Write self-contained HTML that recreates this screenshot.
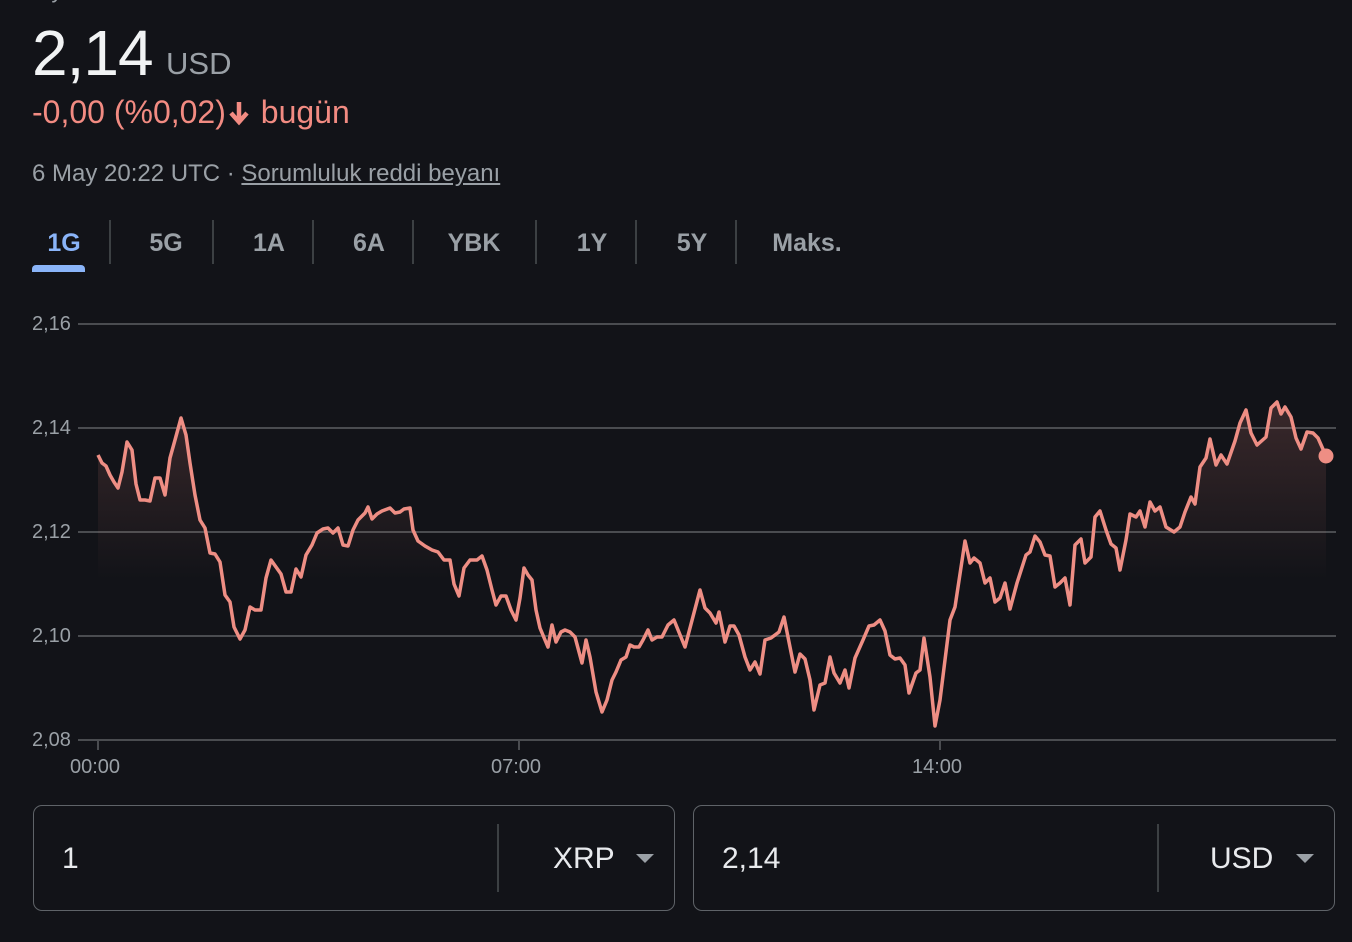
<!DOCTYPE html>
<html><head><meta charset="utf-8"><style>
body{margin:0;width:1352px;height:942px;background:#121318;overflow:hidden;font-family:"Liberation Sans",Arial,sans-serif;position:relative}
.a{position:absolute;white-space:nowrap}
.tab{position:absolute;top:229px;font-size:25px;font-weight:bold;color:#9aa0a6;transform:translateX(-50%)}
.sep{position:absolute;top:220px;width:2px;height:44px;background:#3c4043}
.yl{position:absolute;left:32px;font-size:20px;color:#9aa0a6}
.box{position:absolute;top:805px;height:104px;width:640px;border:1.5px solid #5f6368;border-radius:9px}
.box .v{position:absolute;left:28px;top:36px;font-size:30px;color:#e8eaed}
.box .d{position:absolute;left:463px;top:18px;width:2px;height:68px;background:#3c4043}
.box .c{position:absolute;top:36px;font-size:30px;color:#e8eaed}
.box .t{position:absolute;left:602px;top:48px;width:0;height:0;border-left:9px solid transparent;border-right:9px solid transparent;border-top:9px solid #9aa0a6}
</style></head><body>
<div class="a" style="left:32px;top:-22px;font-size:22px;color:#9aa0a6">Piyasa Özeti</div>
<div class="a" style="left:32px;top:16px;font-size:64px;color:#f1f3f4;letter-spacing:-1px">2,14</div>
<div class="a" style="left:166px;top:46px;font-size:31px;color:#9aa0a6">USD</div>
<div class="a" style="left:32px;top:94px;font-size:32px;color:#f28b82">-0,00 (%0,02)<svg width="26" height="26" viewBox="0 0 26 26" style="vertical-align:-3px"><path d="M13 2v17M5 13l8 9 8-9" stroke="#f28b82" stroke-width="4.5" fill="none"/></svg> bugün</div>
<div class="a" style="left:32px;top:160px;font-size:24px;color:#9aa0a6">6 May 20:22 UTC · <span style="text-decoration:underline">Sorumluluk reddi beyanı</span></div>
<div class="tab" style="left:64px;color:#8ab4f8">1G</div>
<div class="a" style="left:32px;top:265px;width:53px;height:7px;background:#8ab4f8;border-radius:4px 4px 0 0"></div>
<div class="tab" style="left:166px">5G</div><div class="tab" style="left:269px">1A</div><div class="tab" style="left:369px">6A</div><div class="tab" style="left:474px">YBK</div><div class="tab" style="left:592px">1Y</div><div class="tab" style="left:692px">5Y</div><div class="tab" style="left:807px">Maks.</div>
<div class="sep" style="left:109px"></div><div class="sep" style="left:212px"></div><div class="sep" style="left:312px"></div><div class="sep" style="left:412px"></div><div class="sep" style="left:535px"></div><div class="sep" style="left:635px"></div><div class="sep" style="left:735px"></div>
<div class="yl" style="top:313px">2,16</div><div class="yl" style="top:417px">2,14</div><div class="yl" style="top:521px">2,12</div><div class="yl" style="top:625px">2,10</div><div class="yl" style="top:729px">2,08</div>
<div class="a" style="left:70px;top:756px;font-size:20px;color:#9aa0a6">00:00</div>
<div class="a" style="left:491px;top:756px;font-size:20px;color:#9aa0a6">07:00</div>
<div class="a" style="left:912px;top:756px;font-size:20px;color:#9aa0a6">14:00</div>
<svg class="a" style="left:0;top:0" width="1352" height="942">
<defs><linearGradient id="g" x1="0" y1="400" x2="0" y2="580" gradientUnits="userSpaceOnUse"><stop offset="0" stop-color="#f28b82" stop-opacity="0.18"/><stop offset="1" stop-color="#f28b82" stop-opacity="0"/></linearGradient></defs>
<g stroke="#4a4c50" stroke-width="2"><line x1="78" y1="324" x2="1336" y2="324"/><line x1="78" y1="428" x2="1336" y2="428"/><line x1="78" y1="532" x2="1336" y2="532"/><line x1="78" y1="636" x2="1336" y2="636"/><line x1="78" y1="740" x2="1336" y2="740"/><line x1="98" y1="740" x2="98" y2="750"/><line x1="519" y1="740" x2="519" y2="750"/><line x1="940" y1="740" x2="940" y2="750"/></g>
<polyline fill="url(#g)" stroke="none" points="98,580 98,455 102,463 106,466 110,475 114,482 118,488 122,472 127,442 132,450 136,484 140,500 145,500 150,501 155,478 160,478 165,495 170,458 175,440 181,418 186,435 190,463 195,495 200,520 205,528 210,553 215,554 220,562 225,595 230,602 234,627 240,639 245,630 250,607 255,610 261,610 266,578 271,560 276,567 281,574 286,592 291,592 296,569 301,577 306,555 312,545 317,533 323,529 328,528 333,533 338,528 343,545 348,546 353,530 358,520 365,513 368,507 372,519 377,514 382,511 390,508 395,513 400,512 404,509 410,508 413,530 418,541 425,546 432,550 438,552 444,560 450,580 1326,580 1326,456 1318,438 1313,433 1307,432 1301,449 1296,438 1291,417 1285,407 1281,414 1277,402 1271,408 1266,437 1257,445 1251,433 1246,410 1240,423 1235,441 1227,464 1221,455 1216,465 1210,439 1206,458 1200,467 1195,504 1191,497 1185,512 1180,527 1174,532 1166,527 1160,507 1155,511 1150,502 1145,527 1140,511 1136,517 1130,514 1126,540 1120,570 1116,580"/>
<polyline fill="none" stroke="#ee8e84" stroke-width="3.5" stroke-linejoin="round" points="98,455 102,463 106,466 110,475 114,482 118,488 122,472 127,442 132,450 136,484 140,500 145,500 150,501 155,478 160,478 165,495 170,458 175,440 181,418 186,435 190,463 195,495 200,520 205,528 210,553 215,554 220,562 225,595 230,602 234,627 240,639 245,630 250,607 255,610 261,610 266,578 271,560 276,567 281,574 286,592 291,592 296,569 301,577 306,555 312,545 317,533 323,529 328,528 333,533 338,528 343,545 348,546 353,530 358,520 365,513 368,507 372,519 377,514 382,511 390,508 395,513 400,512 404,509 410,508 413,530 418,541 425,546 432,550 438,552 444,560 450,560 454,584 459,596 464,568 470,560 477,560 482,556 487,570 492,590 496,605 501,596 506,596 511,610 516,620 520,598 524,568 528,575 532,580 536,610 540,628 545,640 548,647 552,625 556,642 561,632 565,630 570,632 575,637 582,663 586,640 590,657 596,692 602,712 607,700 612,680 616,672 621,660 626,657 630,645 634,647 639,647 643,640 648,630 652,640 657,637 662,637 668,625 674,620 685,647 700,590 705,608 710,613 716,623 719,612 725,642 730,626 734,626 739,635 745,657 750,670 755,662 760,674 765,640 771,638 779,632 784,617 795,672 800,654 805,659 810,680 814,710 820,685 825,683 830,657 834,673 840,683 845,670 849,688 855,658 863,640 869,626 874,625 880,620 885,631 890,655 895,659 900,658 905,665 909,693 916,673 920,670 924,638 930,677 935,726 940,700 950,620 955,607 965,541 970,563 974,558 980,563 985,583 990,578 995,602 1000,598 1005,583 1010,609 1017,583 1026,555 1030,552 1035,536 1040,542 1045,555 1050,556 1055,587 1060,583 1065,578 1070,605 1075,545 1081,539 1085,563 1091,557 1095,517 1100,511 1106,530 1111,544 1116,548 1120,570 1126,540 1130,514 1136,517 1140,511 1145,527 1150,502 1155,511 1160,507 1166,527 1174,532 1180,527 1185,512 1191,497 1195,504 1200,467 1206,458 1210,439 1216,465 1221,455 1227,464 1235,441 1240,423 1246,410 1251,433 1257,445 1266,437 1271,408 1277,402 1281,414 1285,407 1291,417 1296,438 1301,449 1307,432 1313,433 1318,438 1326,456"/>
<circle cx="1326" cy="456" r="7.5" fill="#ee8e84"/>
</svg>
<div class="box" style="left:33px"><div class="v">1</div><div class="d"></div><div class="c" style="left:519px">XRP</div><div class="t"></div></div>
<div class="box" style="left:693px"><div class="v">2,14</div><div class="d"></div><div class="c" style="left:516px">USD</div><div class="t"></div></div>
</body></html>
